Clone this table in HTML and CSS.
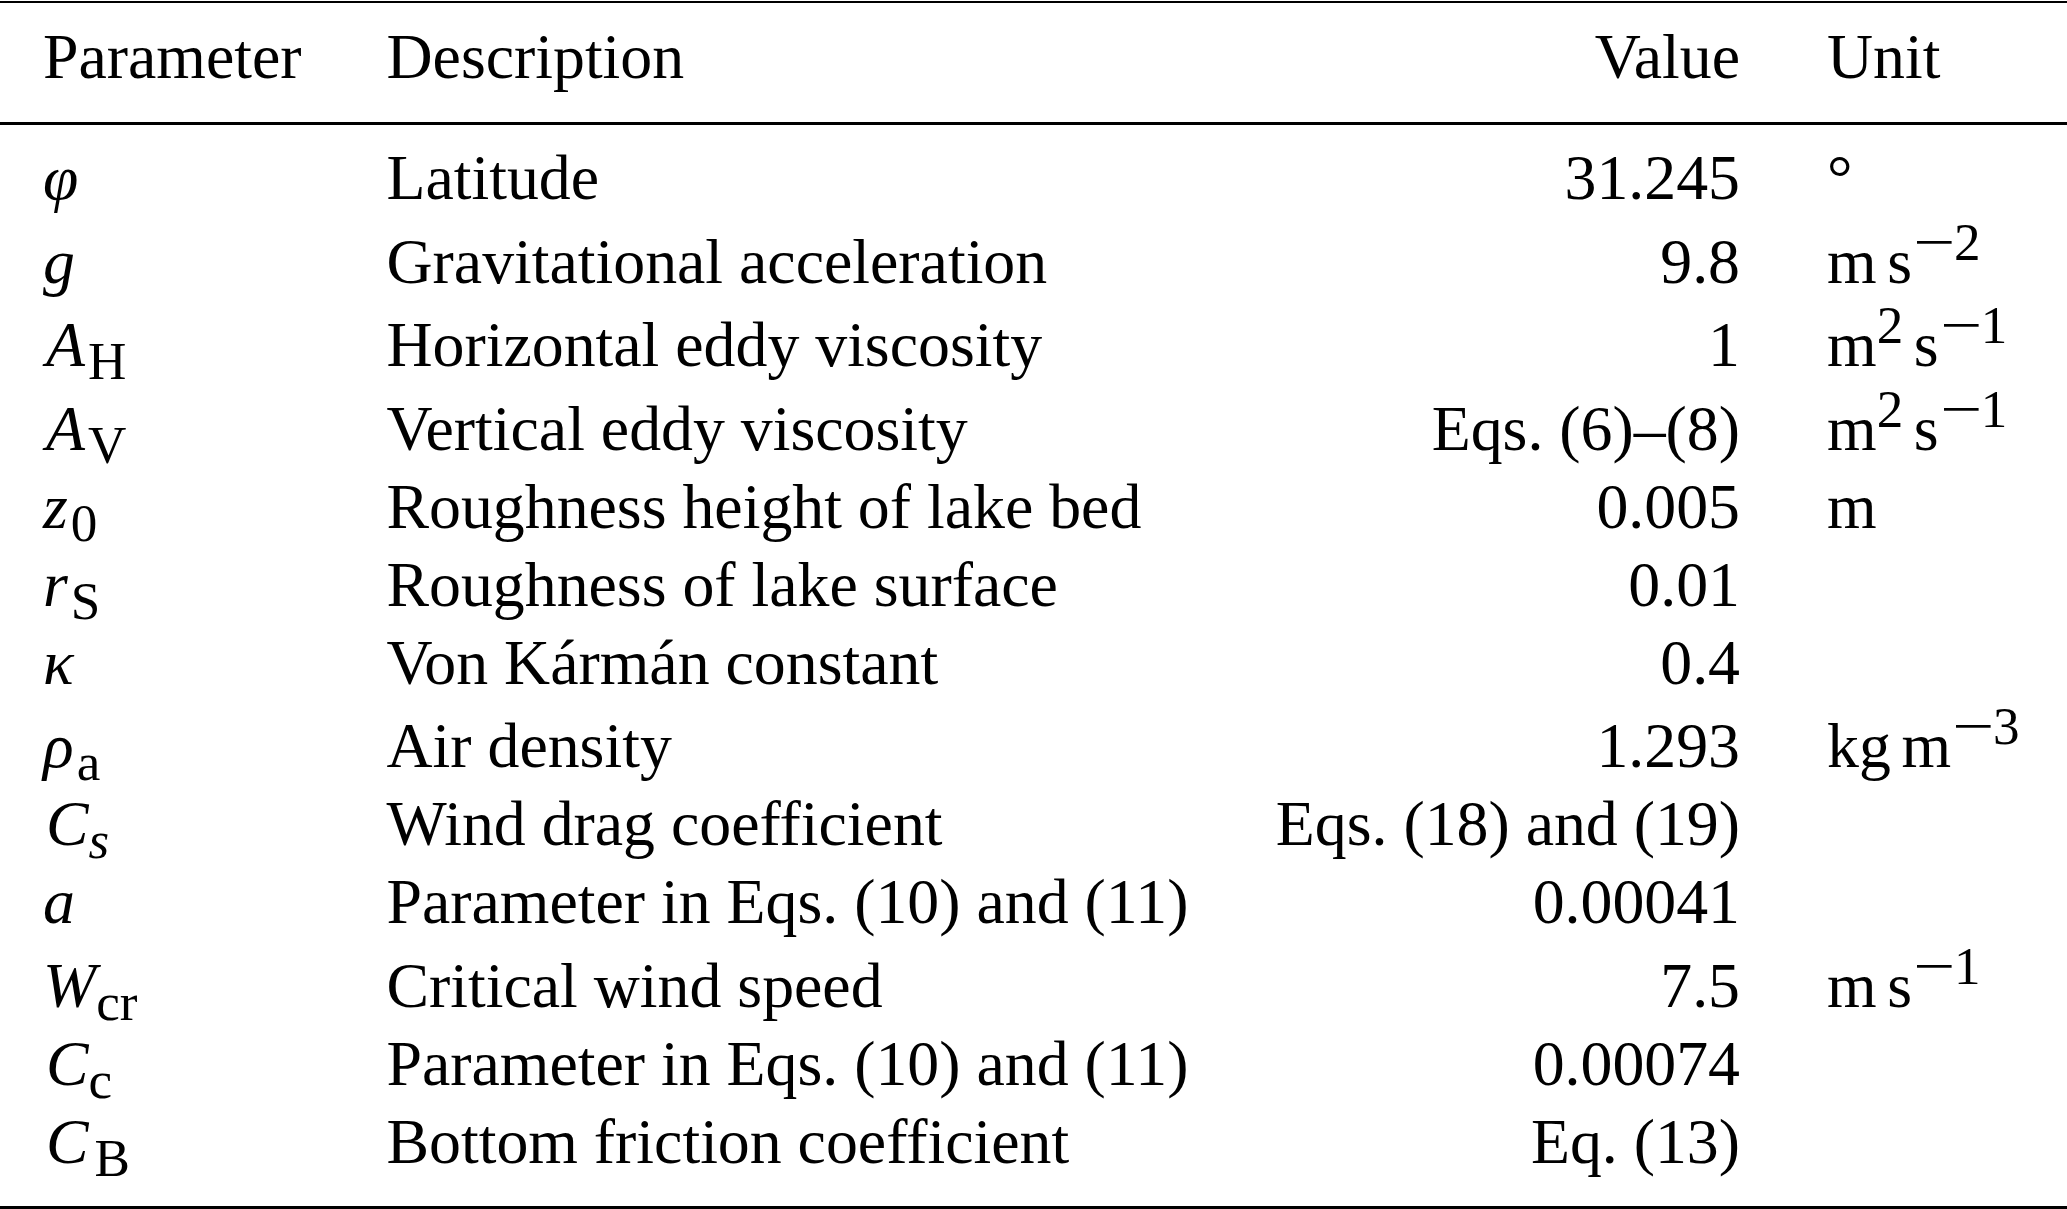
FILE: index.html
```html
<!DOCTYPE html>
<html lang="en">
<head>
<meta charset="utf-8">
<title>Model parameters</title>
<link rel="stylesheet" href="styles.css">
</head>
<body>
<div class="table">
  <div class="row head">
    <div class="c sym">Parameter</div>
    <div class="c desc">Description</div>
    <div class="c val">Value</div>
    <div class="c unit">Unit</div>
  </div>
  <div class="tbody">
    <div class="row">
      <div class="c sym"><i>φ</i></div>
      <div class="c desc">Latitude</div>
      <div class="c val">31.245</div>
      <div class="c unit">°</div>
    </div>
    <div class="row sup-row">
      <div class="c sym"><i>g</i></div>
      <div class="c desc">Gravitational acceleration</div>
      <div class="c val">9.8</div>
      <div class="c unit">m<span class="ts"></span>s<sup><span class="mn">−</span>2</sup></div>
    </div>
    <div class="row sup-row">
      <div class="c sym"><i class="cap">A</i><sub>H</sub></div>
      <div class="c desc">Horizontal eddy viscosity</div>
      <div class="c val">1</div>
      <div class="c unit">m<sup>2</sup><span class="ts"></span>s<sup><span class="mn">−</span>1</sup></div>
    </div>
    <div class="row sup-row">
      <div class="c sym"><i class="cap">A</i><sub>V</sub></div>
      <div class="c desc">Vertical eddy viscosity</div>
      <div class="c val">Eqs. (6)–(8)</div>
      <div class="c unit">m<sup>2</sup><span class="ts"></span>s<sup><span class="mn">−</span>1</sup></div>
    </div>
    <div class="row">
      <div class="c sym"><i>z</i><sub>0</sub></div>
      <div class="c desc">Roughness height of lake bed</div>
      <div class="c val">0.005</div>
      <div class="c unit">m</div>
    </div>
    <div class="row">
      <div class="c sym"><i>r</i><sub>S</sub></div>
      <div class="c desc">Roughness of lake surface</div>
      <div class="c val">0.01</div>
      <div class="c unit"></div>
    </div>
    <div class="row">
      <div class="c sym"><i>κ</i></div>
      <div class="c desc">Von Kármán constant</div>
      <div class="c val">0.4</div>
      <div class="c unit"></div>
    </div>
    <div class="row sup-row">
      <div class="c sym"><i>ρ</i><sub>a</sub></div>
      <div class="c desc">Air density</div>
      <div class="c val">1.293</div>
      <div class="c unit">kg<span class="ts"></span>m<sup><span class="mn">−</span>3</sup></div>
    </div>
    <div class="row">
      <div class="c sym"><i class="cap">C</i><sub class="tight"><i>s</i></sub></div>
      <div class="c desc">Wind drag coefficient</div>
      <div class="c val">Eqs. (18) and (19)</div>
      <div class="c unit"></div>
    </div>
    <div class="row">
      <div class="c sym"><i>a</i></div>
      <div class="c desc">Parameter in Eqs. (10) and (11)</div>
      <div class="c val">0.00041</div>
      <div class="c unit"></div>
    </div>
    <div class="row sup-row">
      <div class="c sym"><i>W</i><sub class="tight">cr</sub></div>
      <div class="c desc">Critical wind speed</div>
      <div class="c val">7.5</div>
      <div class="c unit">m<span class="ts"></span>s<sup><span class="mn">−</span>1</sup></div>
    </div>
    <div class="row">
      <div class="c sym"><i class="cap">C</i><sub class="tight">c</sub></div>
      <div class="c desc">Parameter in Eqs. (10) and (11)</div>
      <div class="c val">0.00074</div>
      <div class="c unit"></div>
    </div>
    <div class="row">
      <div class="c sym"><i class="cap">C</i><sub class="wide">B</sub></div>
      <div class="c desc">Bottom friction coefficient</div>
      <div class="c val">Eq. (13)</div>
      <div class="c unit"></div>
    </div>
  </div>
</div>
</body>
</html>
```

FILE: styles.css
```css
html, body {
  margin: 0;
  padding: 0;
  background: #ffffff;
}

body {
  font-family: "Liberation Serif", "Times New Roman", serif;
  font-size: 63.8px;
  color: #000000;
}

.table {
  width: 2067px;
  margin-top: 1px;
  border-top: 2px solid #000000;
  border-bottom: 3px solid #000000;
}

.row {
  display: grid;
  grid-template-columns: 343.5px 853.5px 500px 1fr;
  padding: 4px 0 4px 43px;
  line-height: 70px;
  white-space: nowrap;
}

.row.head {
  padding-top: 19px;
  padding-bottom: 30px;
  border-bottom: 3px solid #000000;
}

.tbody {
  padding: 14px 0 25.5px;
}

.row.sup-row {
  padding-top: 9.5px;
}

.val {
  text-align: right;
}

.unit {
  padding-left: 87px;
}

i {
  font-style: italic;
}

i.cap {
  margin-left: 3px;
}

sub,
sup {
  font-size: 0.833em;
  line-height: 0;
}

sup {
  vertical-align: 23px;
}

sub {
  vertical-align: -13px;
  margin-left: 3px;
}

sub.tight {
  margin-left: 0;
}

sub.wide {
  margin-left: 6px;
}

.mn {
  display: inline-block;
  transform: scaleX(1.4);
  margin: 0 5px 0 7px;
}

.ts {
  display: inline-block;
  width: 0.167em;
}
```
